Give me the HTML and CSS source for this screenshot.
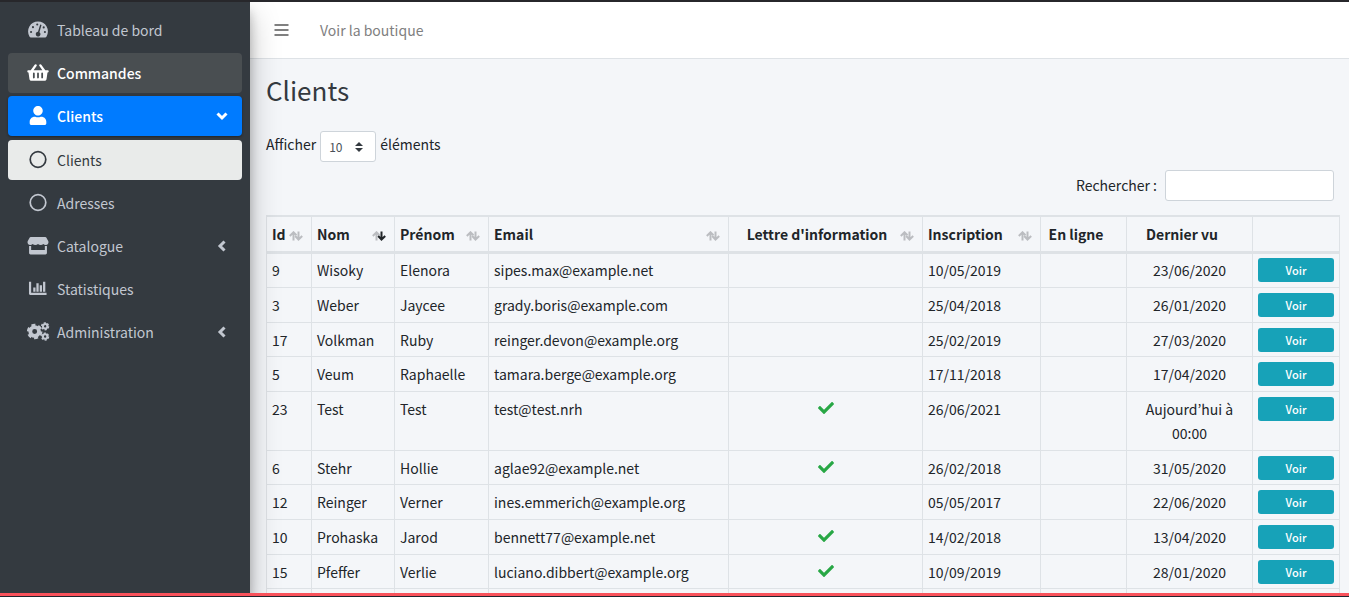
FILE: index.html
```html
<!DOCTYPE html>
<html lang="fr">
<head>
<meta charset="utf-8">
<title>Clients</title>
<link rel="stylesheet" href="styles.css">
</head>
<body>
<svg class="defs" aria-hidden="true">
  <symbol id="check" viewBox="0 0 512 512"><path d="M173.898 439.404l-166.4-166.4c-9.997-9.997-9.997-26.206 0-36.204l36.203-36.204c9.997-9.998 26.207-9.998 36.204 0L192 312.69 432.095 72.596c9.997-9.997 26.207-9.997 36.204 0l36.203 36.204c9.997 9.997 9.997 26.206 0 36.204l-294.4 294.401c-9.998 9.997-26.207 9.997-36.204-.001z"/></symbol>
  <symbol id="up" viewBox="0 0 14 10"><path d="M4.500 9.500V1.500M.8 5L4.500 1.300L7.500 4.300"/></symbol>
  <symbol id="down" viewBox="0 0 14 10"><path d="M9.500 .5V8.500M6.200 5L9.500 8.500L13.200 5"/></symbol>
  <symbol id="left" viewBox="0 0 10 12"><path d="M7.500 1.500L3 6L7.500 10.500"/></symbol>
</svg>
<div class="page">
  <aside class="sidebar">
    <nav class="menu">
      <a class="item" href="#"><svg class="icon" viewBox="0 0 22 20"><path fill="currentColor" d="M11 1.500A10.500 10.500 0 0 0 2 17.300q.5 1 1.500 1h15q1 0 1.500-1A10.500 10.500 0 0 0 11 1.500z"/><g fill="#343a40"><circle cx="3.700" cy="12.700" r="1.100"/><circle cx="5.700" cy="7.500" r="1.100"/><circle cx="10.200" cy="4.700" r="1.100"/><circle cx="17" cy="7.800" r="1.100"/><circle cx="18.300" cy="12.700" r="1.100"/><path d="M13.300 4.700l1.400.5-2.200 7.600a2.500 2.500 0 1 1-1.500-.4z"/></g></svg><span>Tableau de bord</span></a>
      <a class="item hover" href="#"><svg class="icon" viewBox="0 0 576 512"><path fill="currentColor" d="M576 216v16c0 13.255-10.745 24-24 24h-8l-26.113 182.788C514.509 462.435 494.257 480 470.370 480H105.630c-23.887 0-44.139-17.565-47.518-41.212L32 256h-8c-13.255 0-24-10.745-24-24v-16c0-13.255 10.745-24 24-24h67.341l106.780-146.821c10.395-14.292 30.407-17.453 44.701-7.058 14.293 10.395 17.453 30.408 7.058 44.701L170.477 192h235.046L326.120 82.821c-10.395-14.292-7.234-34.306 7.059-44.701 14.291-10.395 34.306-7.235 44.701 7.058L484.659 192H552c13.255 0 24 10.745 24 24zM312 392V280c0-13.255-10.745-24-24-24s-24 10.745-24 24v112c0 13.255 10.745 24 24 24s24-10.745 24-24zm112 0V280c0-13.255-10.745-24-24-24s-24 10.745-24 24v112c0 13.255 10.745 24 24 24s24-10.745 24-24zm-224 0V280c0-13.255-10.745-24-24-24s-24 10.745-24 24v112c0 13.255 10.745 24 24 24s24-10.745 24-24z"/></svg><span>Commandes</span></a>
      <a class="item active" href="#"><svg class="icon" viewBox="0 0 448 512"><path fill="currentColor" d="M224 256c70.700 0 128-57.300 128-128S294.700 0 224 0 96 57.300 96 128s57.300 128 128 128zm89.600 32h-16.700c-22.200 10.200-46.900 16-72.900 16s-50.600-5.800-72.900-16h-16.700C60.200 288 0 348.200 0 422.400V464c0 26.500 21.500 48 48 48h352c26.500 0 48-21.500 48-48v-41.600c0-74.200-60.200-134.400-134.400-134.400z"/></svg><span>Clients</span><svg class="chevron open"><use href="#left"/></svg></a>
      <a class="item current" href="#"><svg class="icon" viewBox="0 0 22 20"><circle cx="11" cy="10" r="8.200" fill="none" stroke="currentColor" stroke-width="1.800"/></svg><span>Clients</span></a>
      <a class="item" href="#"><svg class="icon" viewBox="0 0 22 20"><circle cx="11" cy="10" r="8.200" fill="none" stroke="currentColor" stroke-width="1.800"/></svg><span>Adresses</span></a>
      <a class="item" href="#"><svg class="icon" viewBox="0 0 22 20"><path fill="currentColor" d="M3.300 1h15.400q.7 0 1 .6L21.600 5c1.200 2.100-.2 4.600-2.300 4.600q-1.700 0-2.700-1.100-1.100 1.100-2.800 1.100T11 8.500Q9.900 9.600 8.200 9.600T5.400 8.500Q4.400 9.600 2.700 9.600C.6 9.600-.8 7.100.4 5L2.300 1.600q.3-.6 1-.6zM1.600 10.400h2.200v4.400h14.400v-4.400h2.200v7.600q0 1.500-1.500 1.500H3.100q-1.500 0-1.500-1.500z"/></svg><span>Catalogue</span><svg class="chevron"><use href="#left"/></svg></a>
      <a class="item" href="#"><svg class="icon" viewBox="0 0 22 20"><path fill="currentColor" d="M1.500 3h2.300v11.500H20v2.300H2.700q-1.200 0-1.200-1.200zM6 9h2.400v4.300H6zM9.300 4.500h2.400v8.800H9.300zM12.800 6.500h2.400v6.800h-2.400zM16.300 3h2.400v10.300h-2.400z"/></svg><span>Statistiques</span></a>
      <a class="item" href="#"><svg class="icon wide" viewBox="0 0 24 20"><g fill="none" stroke="currentColor"><circle cx="8.500" cy="10" r="4.600" stroke-width="4"/><circle cx="8.500" cy="10" r="7" stroke-width="2.400" stroke-dasharray="4.200 3.130"/><circle cx="19.500" cy="4.500" r="2.300" stroke-width="2.100"/><circle cx="19.500" cy="4.500" r="3.600" stroke-width="1.500" stroke-dasharray="2.200 1.570"/><circle cx="19.500" cy="15.300" r="2.300" stroke-width="2.100"/><circle cx="19.500" cy="15.300" r="3.600" stroke-width="1.500" stroke-dasharray="2.200 1.570"/></g></svg><span>Administration</span><svg class="chevron"><use href="#left"/></svg></a>
    </nav>
  </aside>
  <div class="main">
    <header class="topbar">
      <button class="toggle" type="button" aria-label="Menu"><svg viewBox="0 0 14 14"><path fill="currentColor" d="M0 1h14v2H0zM0 6h14v2H0zM0 11h14v2H0z"/></svg></button>
      <a class="shop" href="#">Voir la boutique</a>
    </header>
    <main class="content">
      <h1>Clients</h1>
      <label class="length">Afficher <select><option>10</option></select> éléments</label>
      <label class="search"><span>Rechercher :</span> <input type="search"></label>
      <table>
        <colgroup><col class="c-id"><col class="c-nom"><col class="c-prenom"><col><col class="c-lettre"><col class="c-date"><col class="c-ligne"><col class="c-vu"><col class="c-action"></colgroup>
        <thead>
          <tr>
            <th><div class="head"><span>Id</span><svg class="sort"><use href="#up"/><use href="#down"/></svg></div></th>
            <th><div class="head"><span>Nom</span><svg class="sort"><use href="#up"/><use class="on" href="#down"/></svg></div></th>
            <th><div class="head"><span>Prénom</span><svg class="sort"><use href="#up"/><use href="#down"/></svg></div></th>
            <th><div class="head"><span>Email</span><svg class="sort"><use href="#up"/><use href="#down"/></svg></div></th>
            <th class="mid"><div class="head"><span>Lettre d'information</span><svg class="sort"><use href="#up"/><use href="#down"/></svg></div></th>
            <th><div class="head"><span>Inscription</span><svg class="sort"><use href="#up"/><use href="#down"/></svg></div></th>
            <th class="mid plain">En ligne</th>
            <th class="mid plain">Dernier vu</th>
            <th></th>
          </tr>
        </thead>
        <tbody>
          <tr><td>9</td><td>Wisoky</td><td>Elenora</td><td>sipes.max@example.net</td><td></td><td>10/05/2019</td><td></td><td class="mid">23/06/2020</td><td><a class="view" href="#">Voir</a></td></tr>
          <tr><td>3</td><td>Weber</td><td>Jaycee</td><td>grady.boris@example.com</td><td></td><td>25/04/2018</td><td></td><td class="mid">26/01/2020</td><td><a class="view" href="#">Voir</a></td></tr>
          <tr><td>17</td><td>Volkman</td><td>Ruby</td><td>reinger.devon@example.org</td><td></td><td>25/02/2019</td><td></td><td class="mid">27/03/2020</td><td><a class="view" href="#">Voir</a></td></tr>
          <tr><td>5</td><td>Veum</td><td>Raphaelle</td><td>tamara.berge@example.org</td><td></td><td>17/11/2018</td><td></td><td class="mid">17/04/2020</td><td><a class="view" href="#">Voir</a></td></tr>
          <tr><td>23</td><td>Test</td><td>Test</td><td>test@test.nrh</td><td class="mid"><svg class="check"><use href="#check"/></svg></td><td>26/06/2021</td><td></td><td class="mid">Aujourd’hui à 00:00</td><td><a class="view" href="#">Voir</a></td></tr>
          <tr><td>6</td><td>Stehr</td><td>Hollie</td><td>aglae92@example.net</td><td class="mid"><svg class="check"><use href="#check"/></svg></td><td>26/02/2018</td><td></td><td class="mid">31/05/2020</td><td><a class="view" href="#">Voir</a></td></tr>
          <tr><td>12</td><td>Reinger</td><td>Verner</td><td>ines.emmerich@example.org</td><td></td><td>05/05/2017</td><td></td><td class="mid">22/06/2020</td><td><a class="view" href="#">Voir</a></td></tr>
          <tr><td>10</td><td>Prohaska</td><td>Jarod</td><td>bennett77@example.net</td><td class="mid"><svg class="check"><use href="#check"/></svg></td><td>14/02/2018</td><td></td><td class="mid">13/04/2020</td><td><a class="view" href="#">Voir</a></td></tr>
          <tr><td>15</td><td>Pfeffer</td><td>Verlie</td><td>luciano.dibbert@example.org</td><td class="mid"><svg class="check"><use href="#check"/></svg></td><td>10/09/2019</td><td></td><td class="mid">28/01/2020</td><td><a class="view" href="#">Voir</a></td></tr>
          <tr><td></td><td></td><td></td><td></td><td></td><td></td><td></td><td></td><td></td></tr>
        </tbody>
      </table>
    </main>
  </div>
</div>
</body>
</html>
```
FILE: styles.css
```css
* { box-sizing: border-box; }
body {
  margin: 0;
  font: 14px/24px "Noto Sans CJK KR", "Noto Sans", sans-serif;
  color: #212529;
  background: #f4f6f9;
}
a { color: inherit; text-decoration: none; }
.defs { display: none; }
.page {
  display: flex;
  height: 100vh;
  overflow: hidden;
  border-top: 2px solid #27272b;
}
.page::after {
  content: "";
  position: fixed;
  inset: auto 0 0;
  height: 3px;
  background: #f9525b;
  border-bottom: 1px solid #20242e;
  z-index: 3;
}
.sidebar {
  flex: 0 0 250px;
  z-index: 2;
  background: #343a40;
  box-shadow: 0 14px 28px rgba(0, 0, 0, .25), 0 10px 10px rgba(0, 0, 0, .22);
}
.menu { display: flex; flex-direction: column; gap: 3px; padding: 8px; }
.item {
  display: flex;
  align-items: center;
  height: 40px;
  padding: 0 15px 0 19px;
  border-radius: 4px;
  color: #c2c7d0;
}
.item span { flex: 1; }
.icon { width: 22px; height: 19px; margin: 0 8px 1px 0; }
.wide { width: 24px; margin: 0 7px 1px -1px; }
.hover { background: #494e51; color: #fff; font-weight: 500; }
.active {
  background: #007bff;
  color: #fff;
  font-weight: 500;
  box-shadow: 0 1px 3px rgba(0, 0, 0, .12), 0 1px 2px rgba(0, 0, 0, .24);
}
.current { background: #e9ebea; color: #343a40; margin-top: 1px; }
.chevron { width: 10px; height: 12px; margin-bottom: 1px; fill: none; stroke: currentColor; stroke-width: 3; }
.open { transform: rotate(-90deg); }
.main { flex: 1; min-width: 0; }
.topbar {
  display: flex;
  align-items: center;
  gap: 31px;
  height: 57px;
  padding: 0 24px;
  background: #fff;
  border-bottom: 1px solid #dee2e6;
  color: #808080;
}
.toggle { display: flex; padding: 0; border: 0; background: none; color: inherit; }
.toggle svg { width: 15px; height: 14px; }
.content { padding: 16px 9px 0 16px; }
h1 { margin: 0 0 26px; font-size: 26px; font-weight: 400; line-height: 30px; color: #343a40; }
.length, .search { display: flex; align-items: flex-start; gap: 4px; line-height: 26px; }
.search { justify-content: flex-end; gap: 8px; margin: 8px 6px 14px 0; }
.search span { line-height: 30px; }
select, input {
  height: 31px;
  border: 1px solid #ced4da;
  border-radius: 3px;
  background-color: #fff;
  color: #495057;
  font: 12px/20px "Noto Sans CJK KR", sans-serif;
}
select {
  width: 56px;
  padding: 0 8px;
  appearance: none;
  background: #fff url("data:image/svg+xml,%3Csvg xmlns='http://www.w3.org/2000/svg' viewBox='0 0 4 5'%3E%3Cpath fill='%23343a40' d='M2 0L0 2h4zm0 5L0 3h4z'/%3E%3C/svg%3E") no-repeat right 12px center / 8px 10px;
}
input { width: 169px; }
table { width: 100%; table-layout: fixed; border-collapse: collapse; }
.c-id { width: 45px; }
.c-nom { width: 83px; }
.c-prenom { width: 94px; }
.c-lettre { width: 194px; }
.c-date { width: 118px; }
.c-ligne { width: 86px; }
.c-vu { width: 126px; }
.c-action { width: 87px; }
th, td { padding: 5px; border: 1px solid #dee2e6; text-align: left; vertical-align: top; }
th { border-width: 2px 1px 3px; font-weight: 700; }
tbody tr:first-child td { padding-top: 4px; }
tbody tr:nth-child(3n) td { padding-bottom: 4px; }
.mid { text-align: center; }
th.plain { padding-right: 20px; }
.head { display: flex; align-items: center; margin-right: 3px; }
.head span { flex: 1; }
.sort { width: 14px; height: 10px; margin-top: 3px; fill: none; stroke: #bbbdc1; stroke-width: 2; }
.sort .on { stroke: #212529; }
.check { display: block; width: 16px; height: 16px; margin: 3px auto 0; fill: #28a745; }
.view {
  display: block;
  height: 24px;
  border-radius: 3px;
  background: #17a2b8;
  color: #fff;
  font-size: 11px;
  font-weight: 500;
  text-align: center;
}
```
